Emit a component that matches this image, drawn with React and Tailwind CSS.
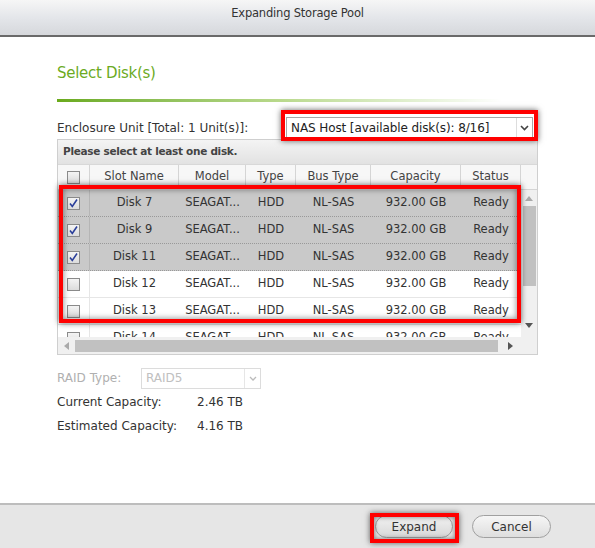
import React from "react";

const font = { fontFamily: '"DejaVu Sans", Verdana, sans-serif' };

const rows = [
  { slot: "Disk 7", sel: true },
  { slot: "Disk 9", sel: true },
  { slot: "Disk 11", sel: true },
  { slot: "Disk 12", sel: false },
  { slot: "Disk 13", sel: false },
  { slot: "Disk 14", sel: false },
];

function Check({ checked }) {
  return (
    <div className="w-[13px] h-[13px] border border-[#8a8a8a] bg-gradient-to-b from-[#f4f4f4] to-[#dcdcdc] flex items-center justify-center">
      {checked && (
        <svg width="11" height="11" viewBox="0 0 11 11">
          <path d="M2 5.5 L4.3 8.5 L9 1.5" stroke="#2b3f9a" strokeWidth="1.6" fill="none" />
        </svg>
      )}
    </div>
  );
}

const cols = "grid grid-cols-[32px_89px_67px_50px_75px_90px_60px]";

export default function App() {
  return (
    <div className="w-[595px] h-[548px] bg-white flex flex-col relative overflow-hidden text-[#333]" style={font}>
      {/* title bar */}
      <div className="h-[37px] shrink-0 bg-gradient-to-b from-[#f6f6f6] via-[#e4e6ea] to-[#d6d8dc] border-b-2 border-[#6a6a6a] flex justify-center pt-[5px]">
        <span className="text-[11.5px] text-[#333] tracking-[-0.2px]">Expanding Storage Pool</span>
      </div>

      <div className="flex-1 px-[57px] pt-[25px]">
        <div className="text-[#6cab1f] text-[15px] tracking-[-0.3px] leading-[22px]">Select Disk(s)</div>
        <div className="mt-[15px] h-[3px] w-[445px] bg-gradient-to-r from-[#6aaa1a] via-[#b9d98c] to-white" />

        <div className="mt-[13px] flex items-center h-[26px]">
          <span className="text-[12px] w-[229px]">Enclosure Unit [Total: 1 Unit(s)]:</span>
          <div className="w-[247px] h-[22px] border border-[#a8a8a8] flex items-center bg-white">
            <span className="flex-1 pl-[4px] text-[12px] tracking-[-0.1px] text-[#222]">NAS Host [available disk(s): 8/16]</span>
            <div className="w-[16px] h-full border-l border-[#ddd] flex items-center justify-center">
              <svg width="9" height="6" viewBox="0 0 9 6"><path d="M1 1 L4.5 4.5 L8 1" stroke="#444" strokeWidth="1.6" fill="none" /></svg>
            </div>
          </div>
        </div>

        {/* table */}
        <div className="mt-[-2px] w-[481px] border border-[#cfcfcf]">
          <div className="h-[25px] bg-gradient-to-b from-[#f4f4f4] to-[#e2e2e2] flex items-center pl-[5px] border-b border-[#d8d8d8]">
            <span className="text-[10.5px] font-bold text-[#444] tracking-[-0.3px]">Please select at least one disk.</span>
          </div>
          <div className="flex h-[25px] bg-[#f7f7f7] border-b border-[#d5d5d5] text-[11.5px] text-[#444]">
            <div className={cols + " w-[463px]"}>
              <div className="flex items-center justify-center border-r border-[#d5d5d5]"><Check /></div>
              {["Slot Name", "Model", "Type", "Bus Type", "Capacity", "Status"].map((h) => (
                <div key={h} className="flex items-center justify-center border-r border-[#d5d5d5]">{h}</div>
              ))}
            </div>
            <div className="flex-1" />
          </div>
          <div className="flex h-[147px] overflow-hidden">
            <div className="w-[463px]">
              {rows.map((r) => (
                <div
                  key={r.slot}
                  className={
                    cols +
                    " h-[27px] text-[11.5px] text-[#333] " +
                    (r.sel ? "bg-[#c9c9c9] border-b border-dotted border-[#999]" : "bg-white border-b border-[#e6e6e6]")
                  }
                >
                  <div className={"flex items-center justify-center border-r " + (r.sel ? "border-[#b5b5b5]" : "border-[#e6e6e6]")}>
                    <Check checked={r.sel} />
                  </div>
                  <div className="flex items-center justify-center">{r.slot}</div>
                  <div className="flex items-center justify-center">SEAGAT...</div>
                  <div className="flex items-center justify-center">HDD</div>
                  <div className="flex items-center justify-center">NL-SAS</div>
                  <div className="flex items-center justify-center">932.00 GB</div>
                  <div className="flex items-center justify-center">Ready</div>
                </div>
              ))}
            </div>
            <div className="flex-1 bg-[#f0f0f0] flex flex-col items-center">
              <svg className="mt-[6px]" width="8" height="5" viewBox="0 0 8 5"><path d="M0 5 L4 0 L8 5 Z" fill="#aaa" /></svg>
              <div className="mt-[5px] w-[13px] h-[80px] bg-[#c1c1c1]" />
              <div className="flex-1" />
              <svg className="mb-[9px]" width="8" height="5" viewBox="0 0 8 5"><path d="M0 0 L4 5 L8 0 Z" fill="#555" /></svg>
            </div>
          </div>
          <div className="h-[17px] bg-[#f0f0f0] flex items-center">
            <svg className="ml-[6px]" width="5" height="8" viewBox="0 0 5 8"><path d="M5 0 L0 4 L5 8 Z" fill="#aaa" /></svg>
            <div className="ml-[6px] w-[423px] h-[12px] bg-[#c1c1c1]" />
            <svg className="ml-[10px]" width="5" height="8" viewBox="0 0 5 8"><path d="M0 0 L5 4 L0 8 Z" fill="#555" /></svg>
          </div>
        </div>

        <div className="mt-[12px] flex items-center h-[22px]">
          <span className="text-[12px] text-[#b0b0b0] w-[84px]">RAID Type:</span>
          <div className="w-[120px] h-[21px] border border-[#dcdcdc] flex items-center">
            <span className="flex-1 pl-[4px] text-[12px] text-[#c0c0c0]">RAID5</span>
            <div className="w-[16px] h-full border-l border-[#e6e6e6] flex items-center justify-center">
              <svg width="8" height="5" viewBox="0 0 8 5"><path d="M1 1 L4 4 L7 1" stroke="#bbb" strokeWidth="1.3" fill="none" /></svg>
            </div>
          </div>
        </div>
        <div className="mt-[2px] flex items-center h-[22px] text-[12px]">
          <span className="w-[140px]">Current Capacity:</span>
          <span>2.46 TB</span>
        </div>
        <div className="mt-[2px] flex items-center h-[22px] text-[12px]">
          <span className="w-[140px]">Estimated Capacity:</span>
          <span>4.16 TB</span>
        </div>
      </div>

      {/* footer */}
      <div className="h-[45px] shrink-0 border-t-2 border-[#bdbdbd] bg-[#e6e6e6] flex items-center justify-end pr-[44px] gap-[19px]">
        <button className="w-[78px] h-[23px] rounded-full border border-[#a0a0a0] bg-gradient-to-b from-[#f2f2f2] to-[#d8d8d8] text-[12px] text-[#333]">Expand</button>
        <button className="w-[79px] h-[23px] rounded-full border border-[#a0a0a0] bg-gradient-to-b from-[#f6f6f6] to-[#dedede] text-[12px] text-[#333]">Cancel</button>
      </div>

      {/* red annotation boxes */}
      <div className="absolute left-[281px] top-[110px] w-[257px] h-[31px] border-[4px] border-[#ff0000] shadow-[0_0_6px_rgba(0,0,0,0.6)]" />
      <div className="absolute left-[59px] top-[185px] w-[462px] h-[138px] border-[4px] border-[#ff0000] shadow-[0_0_6px_rgba(0,0,0,0.6),inset_0_0_6px_rgba(0,0,0,0.5)]" />
      <div className="absolute left-[370px] top-[513px] w-[89px] h-[30px] border-[4px] border-[#ff0000] shadow-[0_0_6px_rgba(0,0,0,0.6),inset_0_0_5px_rgba(0,0,0,0.5)]" />
    </div>
  );
}
